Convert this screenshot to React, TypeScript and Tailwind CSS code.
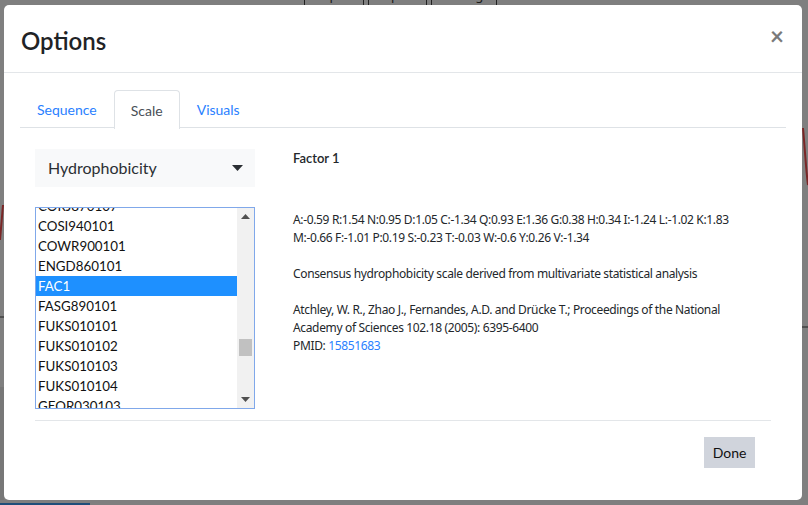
import React from 'react';

const scales = [
    'CORJ870107',
    'COSI940101',
    'COWR900101',
    'ENGD860101',
    'FAC1',
    'FASG890101',
    'FUKS010101',
    'FUKS010102',
    'FUKS010103',
    'FUKS010104',
    'GEOR030103',
];

const font = "font-['Lato','Liberation_Sans',sans-serif]";

const Backdrop = () => (
    <div className="w-[808px] h-[505px] bg-[#7f7f7f] overflow-hidden">
        <div className="flex -mt-[14px] ml-[304px] text-[13px] text-[#1a1a1a]">
            <div className="w-[60px] h-[22px] border-x border-[#222] pl-2">Import</div>
            <div className="w-[59px] h-[22px] border-x border-[#222] ml-[4px] pl-2">Export</div>
            <div className="w-[66px] h-[22px] border-x border-[#222] ml-[4px] pl-2">Settings</div>
        </div>
        <svg width="808" height="505" className="-mt-[8px]">
            <path d="M803 128 C 805 150, 806 170, 808 185" stroke="#7a2626" strokeWidth="2" fill="none" />
            <path d="M3 205 L 0 240" stroke="#7a2626" strokeWidth="2" fill="none" />
            <line x1="0" y1="317" x2="5" y2="317" stroke="#222" strokeWidth="1" />
            <line x1="800" y1="327" x2="808" y2="327" stroke="#222" strokeWidth="1" />
            <rect x="0" y="387" width="4" height="113" fill="#777" />
            <rect x="0" y="503" width="90" height="2" fill="#1f4e79" />
        </svg>
    </div>
);

const Triangle = ({ up }: { up?: boolean }) => (
    <svg width="9" height="5" viewBox="0 0 9 5">
        <polygon points={up ? '0,5 9,5 4.5,0' : '0,0 9,0 4.5,5'} fill="#505050" />
    </svg>
);

const ScaleList = () => (
    <div className="flex h-[202px] w-[220px] border border-[#80a8ea] overflow-hidden bg-white">
        <div className="flex-1 overflow-hidden">
            <div className="-mt-[12px]">
                {scales.map((s) => (
                    <div
                        key={s}
                        className={
                            s === 'FAC1'
                                ? 'h-[20px] leading-[20px] pl-[2px] text-[13.33px] bg-[#1e90ff] text-white'
                                : 'h-[20px] leading-[20px] pl-[2px] text-[13.33px] text-[#111]'
                        }
                    >
                        {s}
                    </div>
                ))}
            </div>
        </div>
        <div className="w-[17px] bg-[#f1f1f1] flex flex-col">
            <div className="h-[17px] flex items-center justify-center"><Triangle up /></div>
            <div className="flex-1">
                <div className="ml-[2px] mt-[114px] w-[13px] h-[17px] bg-[#c1c1c1]" />
            </div>
            <div className="h-[17px] flex items-center justify-center"><Triangle /></div>
        </div>
    </div>
);

const OptionsModal = () => (
    <div className={`absolute left-[4px] top-[5px] w-[798px] h-[495px] bg-white rounded-[5px] ${font} text-[#212529]`}>
        <div className="h-[68px] border-b border-[#e3e6e9] flex items-center justify-between pl-[17px] pr-[18px]">
            <h5 className="text-[24px] font-semibold leading-none mt-[4px] text-[#1f2326]">Options</h5>
            <span className="text-[24px] font-bold text-[#7a7a7a] leading-none -mt-[6px]">×</span>
        </div>

        <div className="px-[16px] pt-[17px]">
            <div className="flex border-b border-[#dee2e6] text-[14px] h-[38px]">
                <div className="pl-[17px] pr-[16px] pt-[9px] text-[#2a7fff]">Sequence</div>
                <div className="px-[16px] pt-[9px] text-[#495057] border border-b-0 border-[#dee2e6] rounded-t-[4px] bg-white h-[39px] -mb-[1px] ml-[1px]">Scale</div>
                <div className="pl-[17px] pt-[9px] text-[#2a7fff]">Visuals</div>
            </div>

            <div className="px-[15px] pt-[21px]">
                <div className="flex">
                    <div className="w-[220px]">
                        <div className="h-[38px] bg-[#f8f9fa] flex items-center justify-between pl-[13px] pr-[12px] text-[16px] text-[#2b2f33]">
                            <span>Hydrophobicity</span>
                            <svg width="11" height="6" viewBox="0 0 11 6">
                                <polygon points="0,0 11,0 5.5,6" fill="#2b2f33" />
                            </svg>
                        </div>
                        <div className="mt-[20px]">
                            <ScaleList />
                        </div>
                    </div>

                    <div className="ml-[38px] font-['Noto_Sans','Open_Sans',sans-serif] text-[12px] tracking-[-0.35px] leading-[18px] text-[#23272b] whitespace-nowrap">
                        <div className={`${font} tracking-normal text-[13px] font-semibold leading-[18px]`}>Factor 1</div>
                        <div className="mt-[44px]">
                            A:-0.59 R:1.54 N:0.95 D:1.05 C:-1.34 Q:0.93 E:1.36 G:0.38 H:0.34 I:-1.24 L:-1.02 K:1.83
                            <br />
                            M:-0.66 F:-1.01 P:0.19 S:-0.23 T:-0.03 W:-0.6 Y:0.26 V:-1.34
                        </div>
                        <div className="mt-[18px]">Consensus hydrophobicity scale derived from multivariate statistical analysis</div>
                        <div className="mt-[18px]">
                            Atchley, W. R., Zhao J., Fernandes, A.D. and Drücke T.; Proceedings of the National
                            <br />
                            Academy of Sciences 102.18 (2005): 6395-6400
                            <br />
                            PMID: <a className="text-[#2a7fff]">15851683</a>
                        </div>
                    </div>
                </div>

                <div className="mt-[11px] border-t border-[#e3e6e9] flex justify-end pt-[16px] pr-[16px]">
                    <button className="w-[51px] h-[31px] bg-[#d0d4dc] text-[14px] text-[#111]">Done</button>
                </div>
            </div>
        </div>
    </div>
);

export default function App() {
    return (
        <div className="relative w-[808px] h-[505px] overflow-hidden">
            <Backdrop />
            <OptionsModal />
        </div>
    );
}
